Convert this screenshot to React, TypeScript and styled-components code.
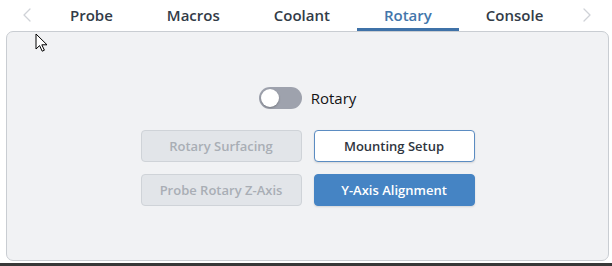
import React, { useState } from 'react';
import styled, { createGlobalStyle } from 'styled-components';

const GlobalStyle = createGlobalStyle`
  html, body {
    margin: 0;
    padding: 0;
    background: #ffffff;
  }
  body {
    font-family: "Open Sans", "Noto Sans", sans-serif;
    width: 612px;
    height: 266px;
    overflow: hidden;
  }
`;

const Page = styled.div`
  position: relative;
  width: 612px;
  height: 266px;
  display: flex;
  flex-direction: column;
`;

const TabBar = styled.div`
  display: flex;
  align-items: stretch;
  height: 31px;
`;

const Arrow = styled.div<{ side: 'left' | 'right' }>`
  width: ${(p) => (p.side === 'left' ? 43 : 41)}px;
  display: flex;
  align-items: center;
  justify-content: ${(p) => (p.side === 'left' ? 'flex-end' : 'flex-start')};
  padding: ${(p) => (p.side === 'left' ? '0 12px 0 0' : '0 0 0 13px')};
  box-sizing: border-box;
  color: #cfd2d7;
  padding-bottom: 2px;
`;

const Tab = styled.button<{ active?: boolean }>`
  border: none;
  background: none;
  padding: 0 27px;
  height: 100%;
  font-family: inherit;
  font-size: 15px;
  font-weight: 600;
  color: ${(p) => (p.active ? '#4376ab' : '#323b47')};
  border-bottom: 3px solid ${(p) => (p.active ? '#3f72a8' : 'transparent')};
  box-sizing: border-box;
  padding-top: 2px;
  cursor: pointer;
`;

const Panel = styled.div`
  margin: 0 3px 0 6px;
  height: 230px;
  box-sizing: border-box;
  background: #f1f2f4;
  border: 1px solid #c9cdd2;
  border-radius: 7px;
  display: flex;
  flex-direction: column;
  align-items: center;
  justify-content: center;
`;

const ToggleRow = styled.label`
  display: flex;
  align-items: center;
  gap: 9px;
  margin-bottom: 21px;
  font-size: 15px;
  color: #141414;
  cursor: pointer;
`;

const Track = styled.span<{ on: boolean }>`
  position: relative;
  width: 43px;
  height: 22px;
  border-radius: 11px;
  background: ${(p) => (p.on ? '#4584c4' : '#9ea2ad')};
  display: inline-block;
`;

const Knob = styled.span<{ on: boolean }>`
  position: absolute;
  top: 2px;
  left: ${(p) => (p.on ? 23 : 2)}px;
  width: 18px;
  height: 18px;
  border-radius: 50%;
  background: #ffffff;
  box-shadow: 0 1px 2px rgba(0, 0, 0, 0.25);
`;

const ButtonGrid = styled.div`
  display: grid;
  grid-template-columns: 161px 161px;
  column-gap: 12px;
  row-gap: 12px;
`;

const ActionButton = styled.button<{ variant: 'disabled' | 'outline' | 'primary' }>`
  height: 32px;
  border-radius: 4px;
  font-family: inherit;
  font-size: 13px;
  font-weight: 600;
  box-sizing: border-box;
  border: 1px solid
    ${(p) =>
      p.variant === 'disabled' ? '#cfd3d8' : p.variant === 'outline' ? '#5b8cc2' : '#4584c4'};
  background: ${(p) =>
    p.variant === 'disabled' ? '#e2e5e9' : p.variant === 'outline' ? '#ffffff' : '#4584c4'};
  color: ${(p) =>
    p.variant === 'disabled' ? '#a9aeb5' : p.variant === 'outline' ? '#2f3540' : '#ffffff'};
  box-shadow: ${(p) => (p.variant === 'disabled' ? 'none' : '0 1px 2px rgba(0,0,0,0.12)')};
  cursor: ${(p) => (p.variant === 'disabled' ? 'default' : 'pointer')};
`;

const BottomEdge = styled.div`
  margin-top: auto;
  height: 3px;
  background: #383838;
`;

const Pointer = styled.svg`
  position: absolute;
  left: 35px;
  top: 33px;
`;

const Chevron = ({ dir }: { dir: 'left' | 'right' }) => (
  <svg width="8" height="14" viewBox="0 0 8 14" fill="none">
    <path
      d={dir === 'left' ? 'M7 1L1 7l6 6' : 'M1 1l6 6-6 6'}
      stroke="currentColor"
      strokeWidth="1.3"
      strokeLinecap="round"
      strokeLinejoin="round"
    />
  </svg>
);

const tabs = ['Probe', 'Macros', 'Coolant', 'Rotary', 'Console'];

export default function App() {
  const [active, setActive] = useState('Rotary');
  const [rotaryOn, setRotaryOn] = useState(false);

  return (
    <Page>
      <GlobalStyle />
      <TabBar>
        <Arrow side="left">
          <Chevron dir="left" />
        </Arrow>
        {tabs.map((t) => (
          <Tab key={t} active={t === active} onClick={() => setActive(t)}>
            {t}
          </Tab>
        ))}
        <Arrow side="right">
          <Chevron dir="right" />
        </Arrow>
      </TabBar>
      <Panel>
        <ToggleRow onClick={() => setRotaryOn(!rotaryOn)}>
          <Track on={rotaryOn}>
            <Knob on={rotaryOn} />
          </Track>
          Rotary
        </ToggleRow>
        <ButtonGrid>
          <ActionButton variant="disabled" disabled>
            Rotary Surfacing
          </ActionButton>
          <ActionButton variant="outline">Mounting Setup</ActionButton>
          <ActionButton variant="disabled" disabled>
            Probe Rotary Z-Axis
          </ActionButton>
          <ActionButton variant="primary">Y-Axis Alignment</ActionButton>
        </ButtonGrid>
      </Panel>
      <BottomEdge />
      <Pointer width="13" height="19" viewBox="0 0 13 19">
        <path
          d="M1 1v15l3.6-3.4 2.6 5.6 2.2-1-2.6-5.4H12z"
          fill="#ffffff"
          stroke="#000000"
          strokeWidth="1"
          strokeLinejoin="round"
        />
      </Pointer>
    </Page>
  );
}
